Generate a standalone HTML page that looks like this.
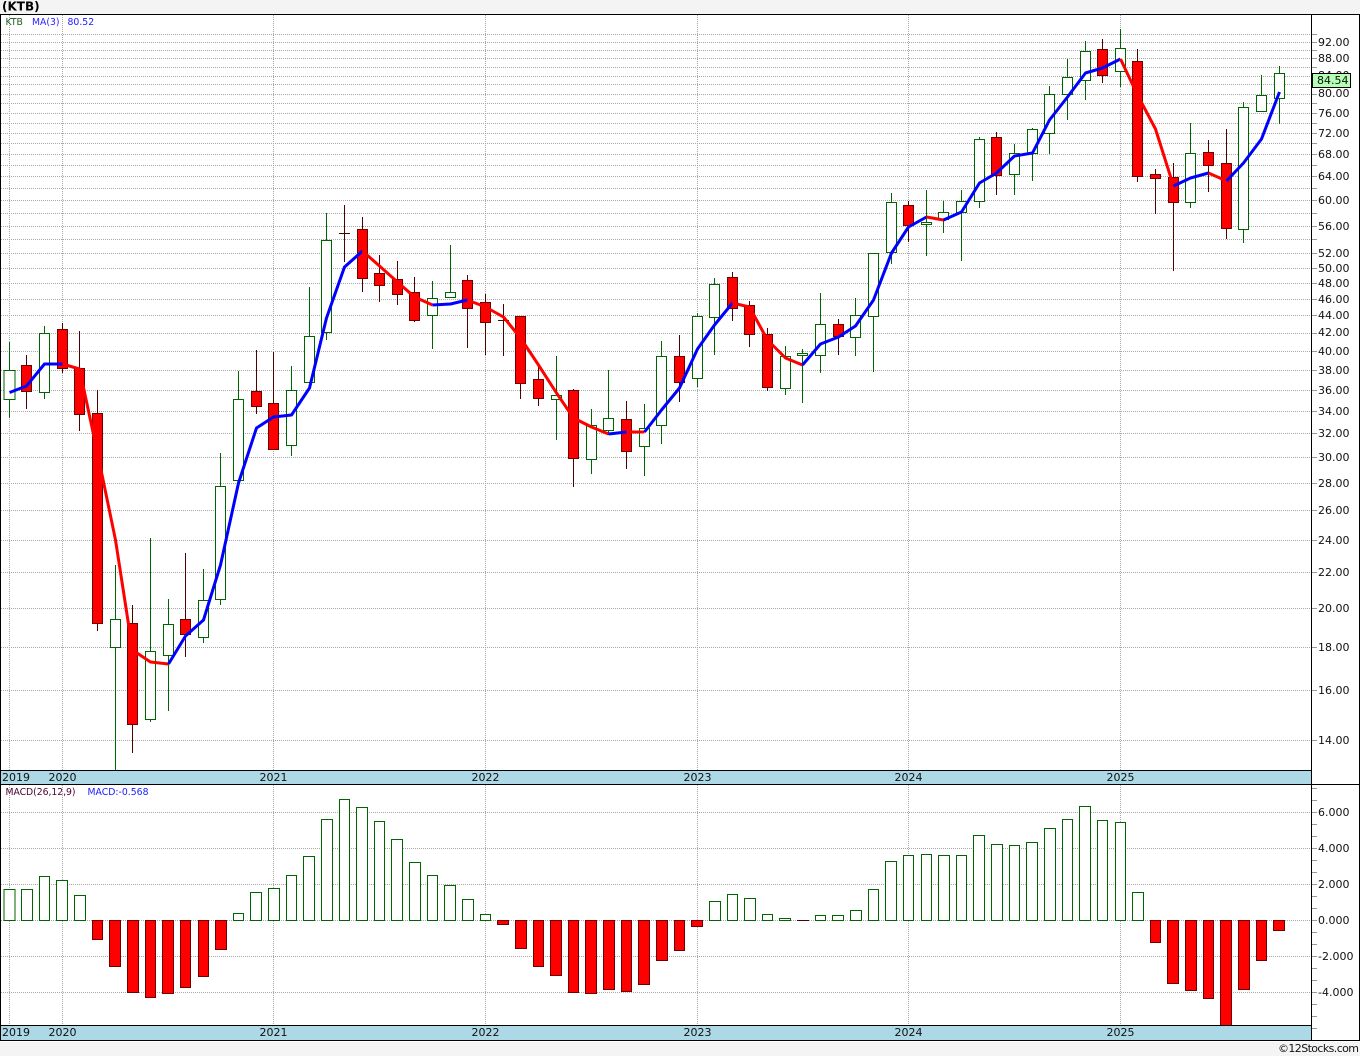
<!DOCTYPE html>
<html><head><meta charset="utf-8"><title>KTB</title>
<style>
html,body{margin:0;padding:0;background:#f4f4f4}
svg{display:block}
text{font-family:"DejaVu Sans","Liberation Sans",sans-serif}
.ax{font-size:11px;fill:#111}
.dt{font-size:11px;fill:#111}
.lg{font-size:9.3px}
.w{fill:none;stroke-width:1;shape-rendering:crispEdges}
.g rect{fill:#fff;stroke:#006400;stroke-width:1;shape-rendering:crispEdges}
.r rect{fill:#f00;stroke:#6e0000;stroke-width:1;shape-rendering:crispEdges}
.ma{fill:none;stroke-width:3;stroke-linejoin:round}
</style></head><body>
<svg width="1360" height="1056" viewBox="0 0 1360 1056" xmlns="http://www.w3.org/2000/svg">
<rect x="0" y="0" width="1360" height="1056" fill="#f4f4f4"/>
<rect x="0" y="14" width="1360" height="1028" fill="#fff"/>
<text x="2" y="10.5" style="font-size:12px;font-weight:bold;fill:#000">(KTB)</text>

<!-- horizontal grid -->
<path fill="none" stroke="#a8a8a8" stroke-width="1" stroke-dasharray="1 1" shape-rendering="crispEdges" d="M1 34.5H1311M1 42.5H1311M1 50.5H1311M1 58.5H1311M1 67.5H1311M1 76.5H1311M1 84.5H1311M1 94.5H1311M1 103.5H1311M1 113.5H1311M1 123.5H1311M1 133.5H1311M1 143.5H1311M1 154.5H1311M1 165.5H1311M1 176.5H1311M1 188.5H1311M1 200.5H1311M1 213.5H1311M1 226.5H1311M1 239.5H1311M1 253.5H1311M1 268.5H1311M1 283.5H1311M1 299.5H1311M1 315.5H1311M1 333.5H1311M1 351.5H1311M1 370.5H1311M1 390.5H1311M1 411.5H1311M1 433.5H1311M1 457.5H1311M1 483.5H1311M1 510.5H1311M1 540.5H1311M1 572.5H1311M1 608.5H1311M1 647.5H1311M1 690.5H1311M1 740.5H1311M1 812.5H1311M1 848.5H1311M1 884.5H1311M1 920.5H1311M1 956.5H1311M1 992.5H1311"/>
<!-- vertical grid -->
<path fill="none" stroke="#a8a8a8" stroke-width="1" stroke-dasharray="1 1" shape-rendering="crispEdges" d="M9.5 15V770M62.5 15V770M273.5 15V770M485.5 15V770M697.5 15V770M908.5 15V770M1120.5 15V770M9.5 785V1025M62.5 785V1025M273.5 785V1025M485.5 785V1025M697.5 785V1025M908.5 785V1025M1120.5 785V1025"/>
<!-- axis ticks -->
<path fill="none" stroke="#999" stroke-width="1" shape-rendering="crispEdges" d="M1312 34.5H1317M1312 42.5H1317M1312 50.5H1317M1312 58.5H1317M1312 67.5H1317M1312 76.5H1317M1312 84.5H1317M1312 94.5H1317M1312 103.5H1317M1312 113.5H1317M1312 123.5H1317M1312 133.5H1317M1312 143.5H1317M1312 154.5H1317M1312 165.5H1317M1312 176.5H1317M1312 188.5H1317M1312 200.5H1317M1312 213.5H1317M1312 226.5H1317M1312 239.5H1317M1312 253.5H1317M1312 268.5H1317M1312 283.5H1317M1312 299.5H1317M1312 315.5H1317M1312 333.5H1317M1312 351.5H1317M1312 370.5H1317M1312 390.5H1317M1312 411.5H1317M1312 433.5H1317M1312 457.5H1317M1312 483.5H1317M1312 510.5H1317M1312 540.5H1317M1312 572.5H1317M1312 608.5H1317M1312 647.5H1317M1312 690.5H1317M1312 740.5H1317M1312 788.5H1317M1312 800.5H1317M1312 812.5H1317M1312 824.5H1317M1312 836.5H1317M1312 848.5H1317M1312 860.5H1317M1312 872.5H1317M1312 884.5H1317M1312 896.5H1317M1312 908.5H1317M1312 920.5H1317M1312 932.5H1317M1312 944.5H1317M1312 956.5H1317M1312 968.5H1317M1312 980.5H1317M1312 992.5H1317M1312 1004.5H1317M1312 1016.5H1317M1312 1028.5H1317"/>

<!-- green wicks -->
<path class="w" stroke="#006400" d="M9.5 342V418M44.5 326V399M115.5 565V770M150.5 538V722M168.5 599V711M203.5 569V643M220.5 453V605M238.5 371V481M291.5 366V456M309.5 287V383M326.5 213V340M432.5 281V349M450.5 245V298M556.5 356V440M591.5 409V474M608.5 370V435M644.5 404V476M661.5 341V444M697.5 313V387M714.5 278V355M785.5 346V395M802.5 349V403M820.5 293V373M855.5 298V356M873.5 253V372M891.5 193V264M926.5 190V256M943.5 201V233M961.5 190V261M979.5 137V208M1014.5 144V195M1032.5 128V181M1049.5 86V154M1067.5 59V120M1085.5 41V100M1120.5 29V87M1190.5 123V208M1243.5 102V243M1261.5 75V112M1279.5 66V124"/>
<!-- red wicks -->
<path class="w" stroke="#4d0000" d="M26.5 355V409M62.5 323V373M79.5 331V431M97.5 390V631M132.5 605V753M185.5 553V657M256.5 350V414M273.5 352V450M344.5 205V262M362.5 217V292M379.5 255V302M397.5 261V305M414.5 277V322M467.5 275V348M485.5 294V355M503.5 304V356M520.5 316V399M538.5 363V406M573.5 389V487M626.5 401V469M679.5 335V402M732.5 272V321M749.5 301V347M767.5 328V391M838.5 319V355M908.5 201V242M996.5 132V195M1102.5 39V83M1137.5 49V182M1155.5 169V214M1173.5 163V271M1208.5 140V192M1226.5 129V239"/>

<!-- green candle bodies -->
<g class="g">
<rect x="4" y="370.5" width="11" height="29"/><rect x="39.5" y="333.5" width="10" height="59"/><rect x="110.5" y="619.5" width="10" height="28"/><rect x="145.5" y="651.5" width="10" height="68"/><rect x="163.5" y="624.5" width="10" height="31"/><rect x="198.5" y="600.5" width="10" height="37"/><rect x="215.5" y="486.5" width="10" height="113"/><rect x="233.5" y="399.5" width="10" height="81"/><rect x="286.5" y="390.5" width="10" height="55"/><rect x="304.5" y="336.5" width="10" height="46"/><rect x="321.5" y="240.5" width="10" height="92"/><rect x="427.5" y="298.5" width="10" height="17"/><rect x="445.5" y="292.5" width="10" height="5"/><rect x="551.5" y="395.5" width="10" height="4"/><rect x="586.5" y="425.5" width="10" height="34"/><rect x="603.5" y="418.5" width="10" height="12"/><rect x="639.5" y="428.5" width="10" height="18"/><rect x="656.5" y="356.5" width="10" height="69"/><rect x="692.5" y="316.5" width="10" height="62"/><rect x="709.5" y="284.5" width="10" height="33"/><rect x="780.5" y="356.5" width="10" height="32"/><rect x="797.5" y="353.5" width="10" height="2"/><rect x="815.5" y="324.5" width="10" height="31"/><rect x="850.5" y="315.5" width="10" height="22"/><rect x="868.5" y="253.5" width="10" height="63"/><rect x="886.5" y="202.5" width="10" height="50"/><rect x="921.5" y="222.5" width="10" height="2"/><rect x="938.5" y="212.5" width="10" height="7"/><rect x="956.5" y="201.5" width="10" height="11"/><rect x="974.5" y="139.5" width="10" height="62"/><rect x="1009.5" y="153.5" width="10" height="21"/><rect x="1027.5" y="129.5" width="10" height="24"/><rect x="1044.5" y="94.5" width="10" height="39"/><rect x="1062.5" y="77.5" width="10" height="17"/><rect x="1080.5" y="51.5" width="10" height="29"/><rect x="1115.5" y="48.5" width="10" height="23"/><rect x="1185.5" y="153.5" width="10" height="49"/><rect x="1238.5" y="107.5" width="10" height="122"/><rect x="1256.5" y="95.5" width="10" height="16"/><rect x="1274.5" y="73.5" width="10" height="25"/>
</g>
<!-- red candle bodies -->
<g class="r">
<rect x="21.5" y="365.5" width="10" height="26"/><rect x="57.5" y="329.5" width="10" height="39"/><rect x="74.5" y="368.5" width="10" height="46"/><rect x="92.5" y="413.5" width="10" height="210"/><rect x="127.5" y="623.5" width="10" height="101"/><rect x="180.5" y="619.5" width="10" height="15"/><rect x="251.5" y="391.5" width="10" height="15"/><rect x="268.5" y="403.5" width="10" height="46"/><rect x="357.5" y="229.5" width="10" height="49"/><rect x="374.5" y="273.5" width="10" height="12"/><rect x="392.5" y="279.5" width="10" height="15"/><rect x="409.5" y="292.5" width="10" height="28"/><rect x="462.5" y="280.5" width="10" height="28"/><rect x="480.5" y="302.5" width="10" height="20"/><rect x="515.5" y="316.5" width="10" height="67"/><rect x="533.5" y="379.5" width="10" height="19"/><rect x="568.5" y="390.5" width="10" height="68"/><rect x="621.5" y="419.5" width="10" height="32"/><rect x="674.5" y="356.5" width="10" height="26"/><rect x="727.5" y="277.5" width="10" height="31"/><rect x="744.5" y="305.5" width="10" height="29"/><rect x="762.5" y="334.5" width="10" height="53"/><rect x="833.5" y="324.5" width="10" height="12"/><rect x="903.5" y="205.5" width="10" height="20"/><rect x="991.5" y="137.5" width="10" height="38"/><rect x="1097.5" y="49.5" width="10" height="26"/><rect x="1132.5" y="61.5" width="10" height="115"/><rect x="1150.5" y="174.5" width="10" height="4"/><rect x="1168.5" y="177.5" width="10" height="25"/><rect x="1203.5" y="152.5" width="10" height="13"/><rect x="1221.5" y="163.5" width="10" height="65"/>
</g>

<!-- doji bars -->
<path class="w" stroke="#4d0000" d="M339 233.5H350M498 320.5H509"/>

<!-- moving average -->
<g class="ma">
<polyline stroke="#00f" points="9.5,392.5 26.5,386 44.5,364 62.5,364"/>
<polyline stroke="#f00" points="62.5,364 79.5,369 97.5,453 115.5,540 132.5,650 150.5,662 168.5,664"/>
<polyline stroke="#00f" points="168.5,664 185.5,636 203.5,620 220.5,565 238.5,483 256.5,428 273.5,417 291.5,415 309.5,388 326.5,318 344.5,267 362.5,251"/>
<polyline stroke="#f00" points="362.5,251 379.5,266 397.5,282 414.5,297 432.5,305"/>
<polyline stroke="#00f" points="432.5,305 450.5,304 467.5,300"/>
<polyline stroke="#f00" points="467.5,300 485.5,307 503.5,317 520.5,338 538.5,365 556.5,393 573.5,418 591.5,427 608.5,434"/>
<polyline stroke="#00f" points="608.5,434 626.5,432"/>
<polyline stroke="#f00" points="626.5,432 644.5,432"/>
<polyline stroke="#00f" points="644.5,432 661.5,410 679.5,388 697.5,349 714.5,325 732.5,303"/>
<polyline stroke="#f00" points="732.5,303 749.5,307 767.5,340 785.5,358 802.5,365"/>
<polyline stroke="#00f" points="802.5,365 820.5,344 838.5,337 855.5,326 873.5,300 891.5,253 908.5,227 926.5,217"/>
<polyline stroke="#f00" points="926.5,217 943.5,220"/>
<polyline stroke="#00f" points="943.5,220 961.5,212 979.5,183 996.5,173 1014.5,156 1032.5,153 1049.5,120 1067.5,97 1085.5,73 1102.5,68 1120.5,59"/>
<polyline stroke="#f00" points="1120.5,59 1137.5,95 1155.5,129 1173.5,186"/>
<polyline stroke="#00f" points="1173.5,186 1190.5,178 1208.5,173"/>
<polyline stroke="#f00" points="1208.5,173 1226.5,181"/>
<polyline stroke="#00f" points="1226.5,181 1243.5,163 1261.5,139 1279.5,92"/>
</g>

<!-- MACD bars -->
<g class="g">
<rect x="4" y="889.5" width="11" height="31"/><rect x="21.5" y="889.5" width="11" height="31"/><rect x="39.5" y="876.5" width="10" height="44"/><rect x="56.5" y="880.5" width="11" height="40"/><rect x="74.5" y="895.5" width="11" height="25"/><rect x="233.5" y="913.5" width="10" height="7"/><rect x="250.5" y="892.5" width="11" height="28"/><rect x="268.5" y="888.5" width="11" height="32"/><rect x="286.5" y="875.5" width="10" height="45"/><rect x="303.5" y="856.5" width="11" height="64"/><rect x="321.5" y="819.5" width="11" height="101"/><rect x="339.5" y="799.5" width="10" height="121"/><rect x="356.5" y="807.5" width="11" height="113"/><rect x="374.5" y="821.5" width="10" height="99"/><rect x="391.5" y="839.5" width="11" height="81"/><rect x="409.5" y="862.5" width="11" height="58"/><rect x="427.5" y="875.5" width="10" height="45"/><rect x="444.5" y="885.5" width="11" height="35"/><rect x="462.5" y="899.5" width="11" height="21"/><rect x="480.5" y="914.5" width="10" height="6"/>
<rect x="709.5" y="901.5" width="11" height="19"/><rect x="727.5" y="894.5" width="10" height="26"/><rect x="744.5" y="898.5" width="11" height="22"/><rect x="762.5" y="914.5" width="10" height="6"/><rect x="779.5" y="918.5" width="11" height="2"/><rect x="815.5" y="915.5" width="10" height="5"/><rect x="832.5" y="915.5" width="11" height="5"/><rect x="850.5" y="910.5" width="11" height="10"/><rect x="868.5" y="889.5" width="10" height="31"/><rect x="885.5" y="861.5" width="11" height="59"/><rect x="903.5" y="855.5" width="10" height="65"/><rect x="921.5" y="854.5" width="10" height="66"/><rect x="938.5" y="855.5" width="11" height="65"/><rect x="956.5" y="855.5" width="10" height="65"/><rect x="973.5" y="835.5" width="11" height="85"/><rect x="991.5" y="844.5" width="11" height="76"/><rect x="1009.5" y="845.5" width="10" height="75"/><rect x="1026.5" y="842.5" width="11" height="78"/><rect x="1044.5" y="828.5" width="11" height="92"/><rect x="1062.5" y="819.5" width="10" height="101"/><rect x="1079.5" y="806.5" width="11" height="114"/><rect x="1097.5" y="820.5" width="10" height="100"/><rect x="1115.5" y="822.5" width="10" height="98"/><rect x="1132.5" y="892.5" width="11" height="28"/>
</g>
<g class="r">
<rect x="92.5" y="920.5" width="10" height="19"/><rect x="109.5" y="920.5" width="11" height="46"/><rect x="127.5" y="920.5" width="11" height="72"/><rect x="145.5" y="920.5" width="10" height="77"/><rect x="162.5" y="920.5" width="11" height="73"/><rect x="180.5" y="920.5" width="10" height="67"/><rect x="198.5" y="920.5" width="10" height="56"/><rect x="215.5" y="920.5" width="11" height="29"/>
<rect x="497.5" y="920.5" width="11" height="4"/><rect x="515.5" y="920.5" width="11" height="28"/><rect x="533.5" y="920.5" width="10" height="46"/><rect x="550.5" y="920.5" width="11" height="55"/><rect x="568.5" y="920.5" width="10" height="72"/><rect x="585.5" y="920.5" width="11" height="73"/><rect x="603.5" y="920.5" width="11" height="69"/><rect x="621.5" y="920.5" width="10" height="71"/><rect x="638.5" y="920.5" width="11" height="64"/><rect x="656.5" y="920.5" width="11" height="40"/><rect x="674.5" y="920.5" width="10" height="30"/><rect x="691.5" y="920.5" width="11" height="6"/>
<rect x="1150.5" y="920.5" width="10" height="22"/><rect x="1167.5" y="920.5" width="11" height="63"/><rect x="1185.5" y="920.5" width="11" height="70"/><rect x="1203.5" y="920.5" width="10" height="78"/><rect x="1220.5" y="920.5" width="11" height="105"/><rect x="1238.5" y="920.5" width="11" height="69"/><rect x="1256.5" y="920.5" width="10" height="40"/><rect x="1273.5" y="920.5" width="11" height="10"/>
</g>
<path class="w" stroke="#4d0000" d="M797 920.5H809"/>

<!-- date bands -->
<rect x="1" y="771" width="1310" height="13" fill="#add8e6"/>
<rect x="1" y="1026" width="1310" height="14" fill="#add8e6"/>

<!-- frame -->
<path fill="none" stroke="#000" stroke-width="1" shape-rendering="crispEdges" d="M0 14.5H1360M0 770.5H1311M0 784.5H1360M0 1025.5H1311M0 1040.5H1360M0.5 14V1041M1311.5 14V1041M1359.5 14V1041"/>

<!-- date labels -->
<g class="dt">
<text x="2" y="781">2019</text><text x="48.5" y="781">2020</text><text x="259.5" y="781">2021</text><text x="471.5" y="781">2022</text><text x="683.5" y="781">2023</text><text x="894.5" y="781">2024</text><text x="1106.5" y="781">2025</text>
<text x="2" y="1036">2019</text><text x="48.5" y="1036">2020</text><text x="259.5" y="1036">2021</text><text x="471.5" y="1036">2022</text><text x="683.5" y="1036">2023</text><text x="894.5" y="1036">2024</text><text x="1106.5" y="1036">2025</text>
</g>

<!-- legends -->
<text class="lg" x="5.5" y="25" fill="#1f5a1f">KTB</text>
<text class="lg" x="32" y="25" fill="#2a1fff">MA(3)</text>
<text class="lg" x="67.5" y="25" fill="#1a1aff">80.52</text>
<text class="lg" x="5.5" y="795" fill="#4d0033" textLength="70">MACD(26,12,9)</text>
<text class="lg" x="87.5" y="795" fill="#1a1aff" textLength="61">MACD:-0.568</text>

<!-- price labels -->
<g class="ax">
<text x="1318" y="46">92.00</text><text x="1318" y="62">88.00</text><text x="1318" y="79">84.00</text><text x="1318" y="97">80.00</text><text x="1318" y="117">76.00</text><text x="1318" y="137">72.00</text><text x="1318" y="158">68.00</text><text x="1318" y="180">64.00</text><text x="1318" y="204">60.00</text><text x="1318" y="230">56.00</text><text x="1318" y="257">52.00</text><text x="1318" y="272">50.00</text><text x="1318" y="287">48.00</text><text x="1318" y="303">46.00</text><text x="1318" y="319">44.00</text><text x="1318" y="336">42.00</text><text x="1318" y="355">40.00</text><text x="1318" y="374">38.00</text><text x="1318" y="394">36.00</text><text x="1318" y="415">34.00</text><text x="1318" y="437">32.00</text><text x="1318" y="461">30.00</text><text x="1318" y="487">28.00</text><text x="1318" y="514">26.00</text><text x="1318" y="544">24.00</text><text x="1318" y="576">22.00</text><text x="1318" y="612">20.00</text><text x="1318" y="651">18.00</text><text x="1318" y="694">16.00</text><text x="1318" y="744">14.00</text>
<text x="1318" y="816">6.000</text><text x="1318" y="852">4.000</text><text x="1318" y="888">2.000</text><text x="1318" y="924">0.000</text><text x="1318" y="960">-2.000</text><text x="1318" y="996">-4.000</text>
</g>
<!-- last price badge -->
<rect x="1312.5" y="73.5" width="38" height="14" fill="#b4ffb4" stroke="#000" stroke-width="1" shape-rendering="crispEdges"/>
<text class="ax" x="1317" y="84">84.54</text>

<text x="1278" y="1052" style="font-size:11px;fill:#111" textLength="81">©12Stocks.com</text>
</svg>
</body></html>
